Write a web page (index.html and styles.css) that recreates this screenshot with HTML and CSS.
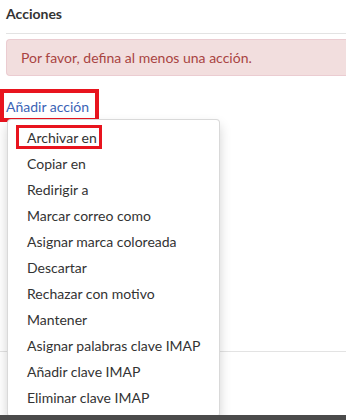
FILE: index.html
```html
<!DOCTYPE html>
<html>

<head>
    <title>Acciones</title>
    <link rel="stylesheet" href="styles.css">
</head>

<body>
    <div class="page">
        <div class="content">
            <h2 class="legend">Acciones</h2>
            <div class="alert">Por favor, defina al menos una acción.</div>
            <div class="add-row">
                <span class="add-action marked"><a href="#">Añadir acción</a></span>
            </div>
        </div>
        <div class="footer"></div>
        <div class="statusbar"></div>

        <ul class="dropdown-menu">
            <li class="marked"><a href="#">Archivar en</a></li>
            <li><a href="#">Copiar en</a></li>
            <li><a href="#">Redirigir a</a></li>
            <li><a href="#">Marcar correo como</a></li>
            <li><a href="#">Asignar marca coloreada</a></li>
            <li><a href="#">Descartar</a></li>
            <li><a href="#">Rechazar con motivo</a></li>
            <li><a href="#">Mantener</a></li>
            <li><a href="#">Asignar palabras clave IMAP</a></li>
            <li><a href="#">Añadir clave IMAP</a></li>
            <li><a href="#">Eliminar clave IMAP</a></li>
        </ul>
    </div>
</body>

</html>
```

FILE: styles.css
```css
html,
body {
    margin: 0;
    padding: 0;
    overflow: hidden;
}

body {
    font-family: Lato, "Noto Sans", sans-serif;
    font-size: 14px;
    line-height: 20px;
    color: #333;
    background-color: #fff;
}

.page {
    position: relative;
    display: flex;
    flex-direction: column;
    height: 100vh;
}

.content {
    flex: 1;
    padding-left: 6px;
}

.legend {
    margin: 0;
    padding-top: 4px;
    padding-bottom: 9px;
    font-size: 14px;
    font-weight: bold;
    line-height: 20px;
    border-bottom: 1px solid #e3e3e3;
}

.alert {
    margin-top: 5px;
    padding: 9px 14px;
    line-height: 17px;
    color: #a94442;
    background-color: #f2dede;
    border: 1px solid #ebccd1;
    border-right: none;
    border-radius: 4px 0 0 4px;
}

.add-row {
    margin-top: 21px;
}

.add-action a {
    color: #3b63b6;
    text-decoration: none;
}

/* red annotation boxes drawn over the screenshot */
.marked {
    position: relative;
}

.marked::after {
    content: "";
    position: absolute;
    box-sizing: border-box;
    border: 3px solid #e8141e;
    pointer-events: none;
}

.add-action {
    display: inline-block;
}

.add-action::after {
    left: -6px;
    top: -8px;
    width: 99px;
    height: 33px;
    border-width: 4px;
}

.footer {
    height: 63px;
    border-top: 1px solid #e3e3e3;
}

.statusbar {
    position: relative;
    z-index: 2;
    height: 5px;
    background-color: #4b4b4b;
}

.dropdown-menu {
    position: absolute;
    z-index: 1;
    left: 7px;
    top: 119px;
    width: 211px;
    margin: 0;
    padding: 5px 0;
    list-style: none;
    background-color: #fff;
    border: 1px solid rgba(0, 0, 0, 0.15);
    border-radius: 4px;
    box-shadow: 0 6px 12px rgba(0, 0, 0, 0.175);
}

.dropdown-menu li {
    display: block;
}

.dropdown-menu li a {
    display: block;
    padding: 3px 19px;
    color: #333;
    text-decoration: none;
    white-space: nowrap;
}

.dropdown-menu li.marked::after {
    left: 8px;
    top: 0;
    width: 86px;
    height: 24px;
}
```
